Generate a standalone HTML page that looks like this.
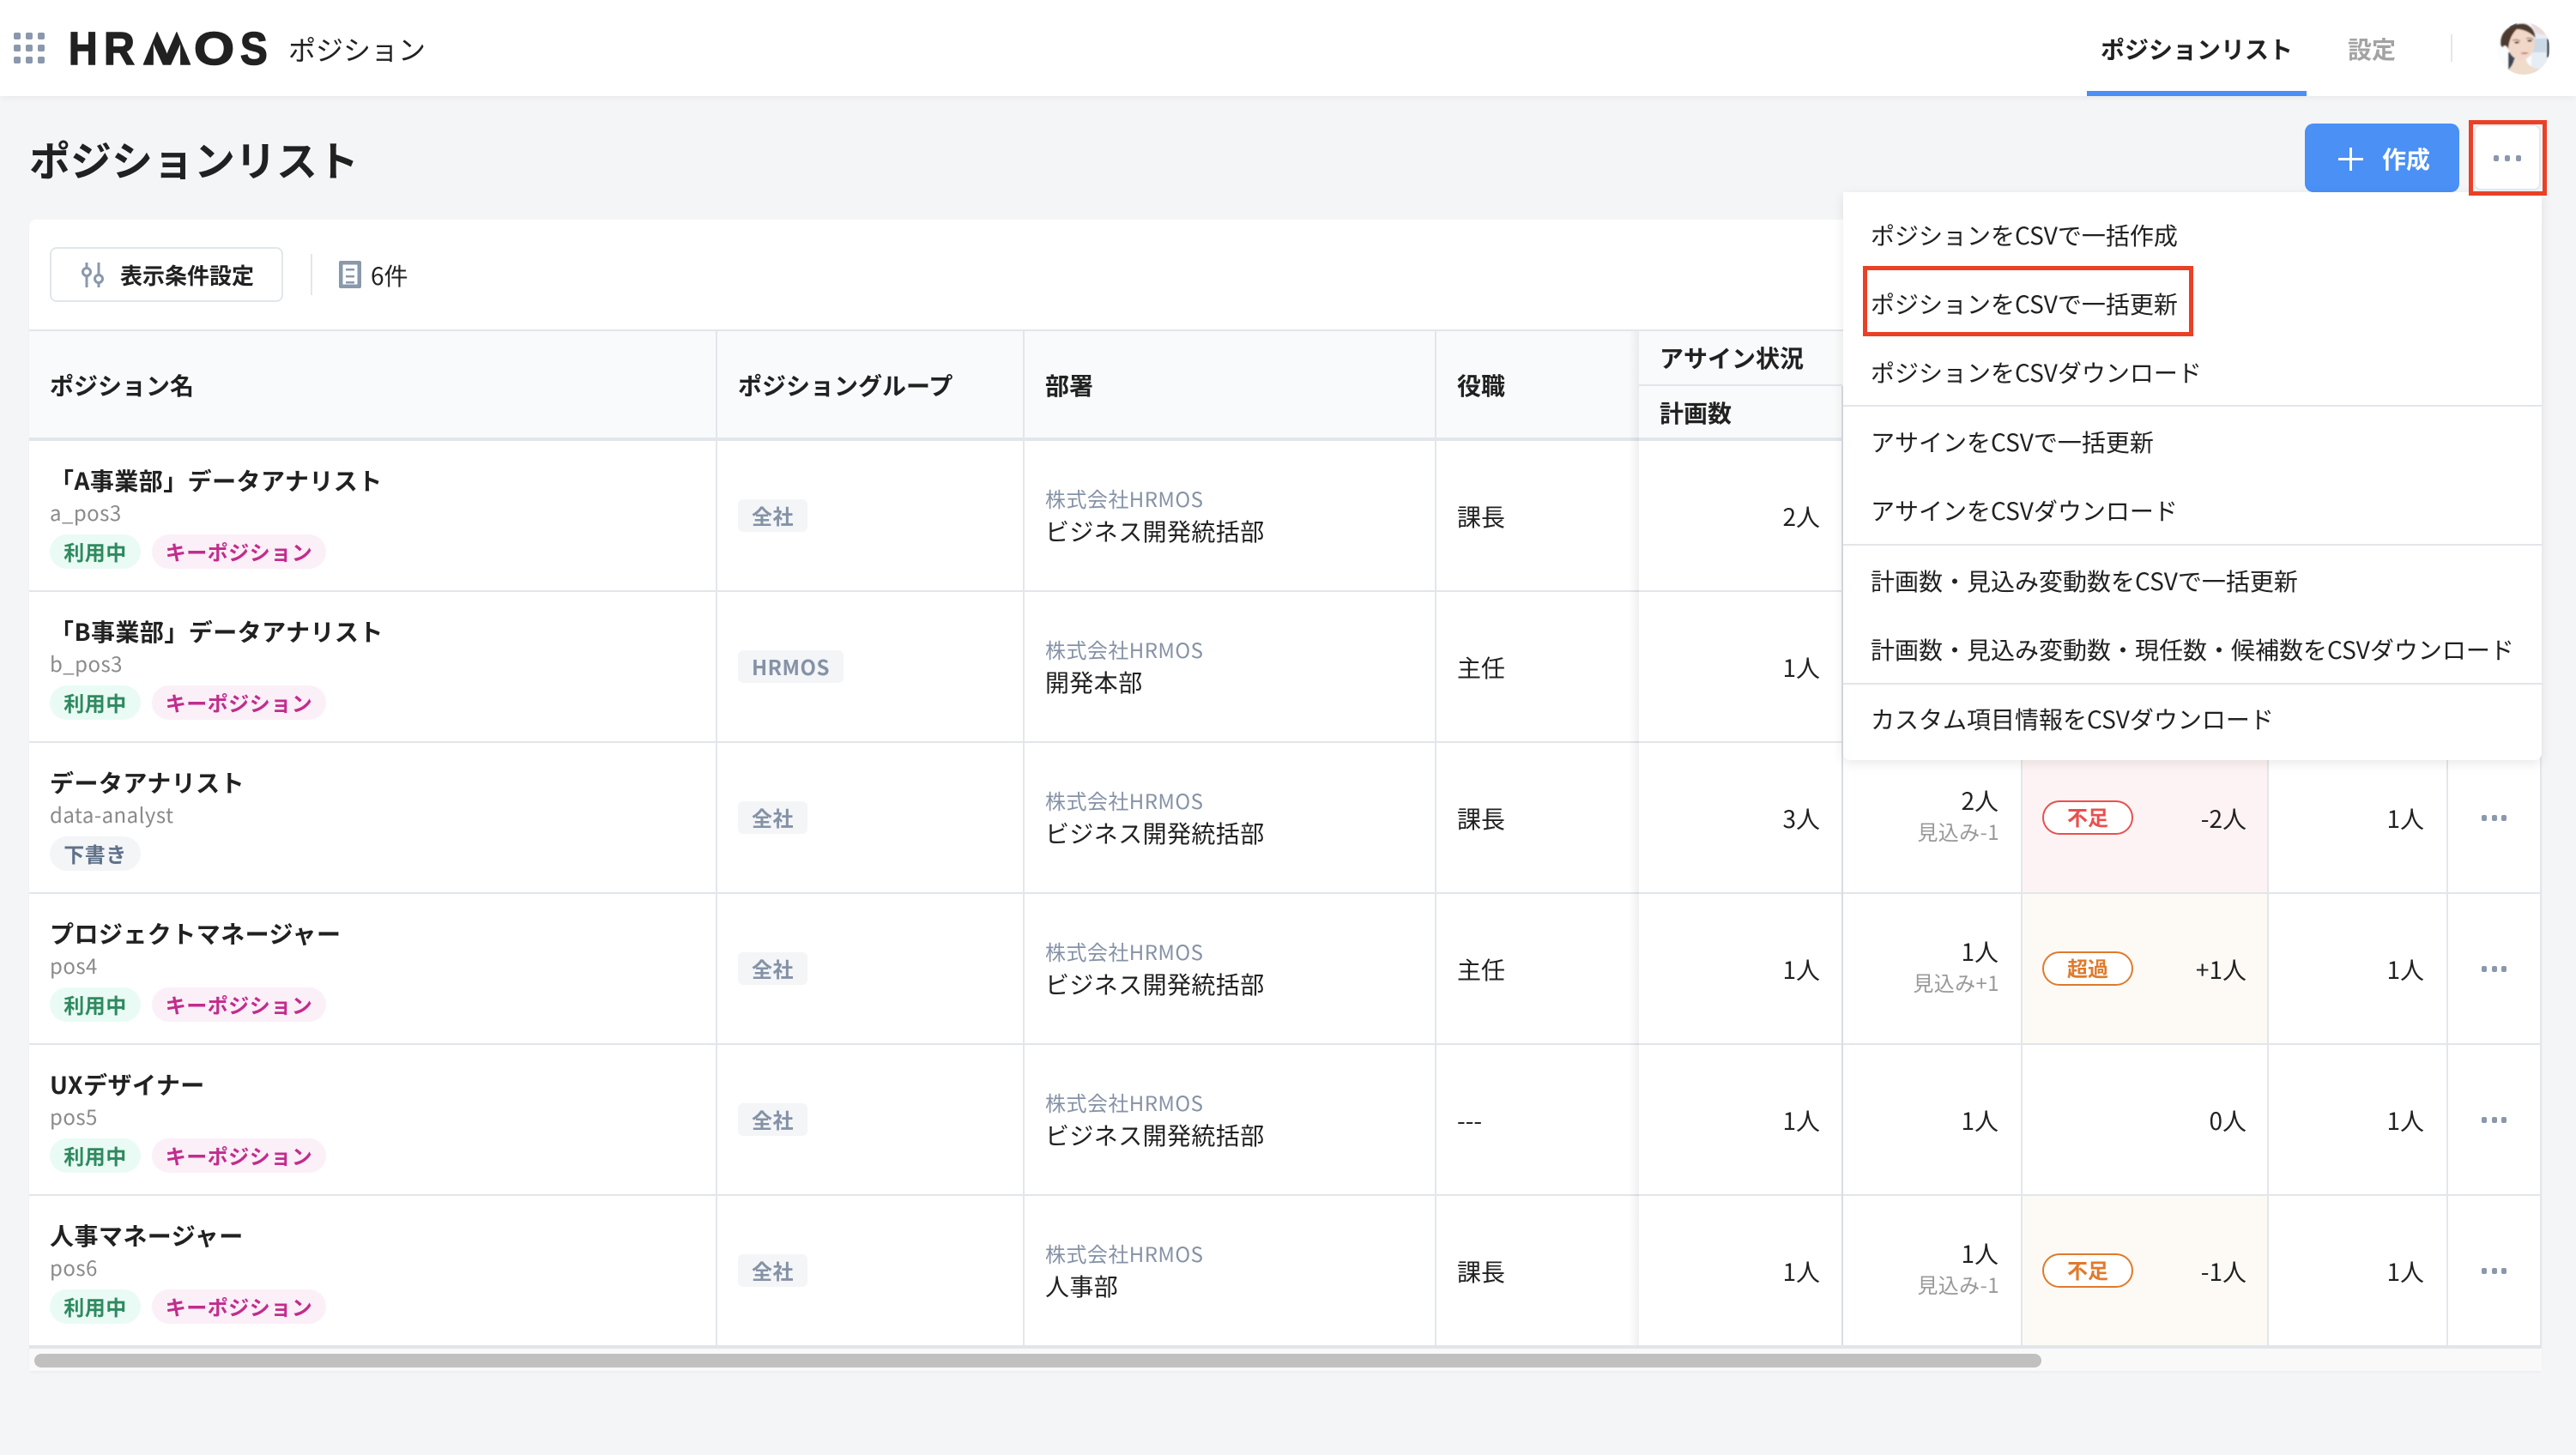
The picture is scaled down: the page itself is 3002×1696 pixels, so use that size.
<!DOCTYPE html>
<html lang="ja"><head><meta charset="utf-8"><title>ポジションリスト</title>
<style>
*{box-sizing:border-box;margin:0;padding:0}
html,body{width:3002px;height:1696px;overflow:hidden;background:#f4f5f7}
body{position:relative;font-family:"Noto Sans CJK JP","Liberation Sans",sans-serif;color:#212121;font-size:28px}
.a{position:absolute}
.t{position:absolute;white-space:nowrap;line-height:40px;height:40px;font-size:28px}
.b{font-weight:700}
.vl{position:absolute;width:2px;top:386px;height:1182px;background:#e3e6ea}
.hl{position:absolute;left:34px;width:2928px;height:2px;background:#e2e6ea}
.row{position:absolute;left:0;width:3002px;height:174px}
.nm{left:58px;top:26px;font-weight:700;letter-spacing:.45px}
.sub{left:58px;top:63px;font-size:24px;color:#8a8a8a;letter-spacing:.45px}
.pill{position:absolute;top:109px;height:40px;line-height:39px;border-radius:20px;font-size:24px;font-weight:700;text-align:center;white-space:nowrap;letter-spacing:.5px}
.p1{left:58px;width:106px;background:#e9fbf4;color:#2f8a5f}
.p2{left:177px;width:203px;background:#fbeff8;color:#c22c8c}
.p3{left:58px;width:106px;background:#f3f5f7;color:#5f7189}
.grp{position:absolute;left:860px;top:68px;height:38px;line-height:37px;padding:0 16px;border-radius:6px;background:#f3f5f7;color:#8592a6;font-size:24px;font-weight:700;white-space:nowrap;letter-spacing:.5px}
.d1{left:1218px;top:47px;font-size:24px;color:#8592a6;letter-spacing:.45px}
.d2{left:1218px;top:85px;letter-spacing:.4px}
.role{left:1698px;top:68px}
.plan{right:881px;top:68px}
.as{right:673px;top:68px}
.as2{right:673px;top:47px}
.as3{right:672px;top:83px;font-size:24px;color:#999;letter-spacing:.4px}
.dn{right:384px;top:68px}
.nx{right:177px;top:68px}
.st{position:absolute;left:2380px;top:67px;width:106px;height:40px;border-radius:20px;background:#fff;border:2px solid;font-size:24px;font-weight:700;text-align:center;line-height:34px}
.red{color:#e8504f;border-color:#e8504f}
.org{color:#e07a2b;border-color:#e07a2b}
.dots{position:absolute;left:2892px;top:84px;width:29px;height:7px;display:flex;justify-content:space-between}
.dots i{display:block;width:6px;height:7px;border-radius:2px;background:#8a98ac}
.cell{position:absolute;left:2356px;width:286px;height:174px}
.lg{position:absolute;top:30px;font-family:"Liberation Sans",sans-serif;font-weight:700;font-size:54px;line-height:54px;color:#212121;transform-origin:left center;display:block;-webkit-text-stroke:1.6px #212121}
.gd{position:absolute;width:8px;height:8px;border-radius:2px;background:#8a98ac}
.mi{left:2180px;color:#212121}
.md{position:absolute;left:2148px;width:814px;height:2px;background:#e3e5e8}
.rb{position:absolute;border:5px solid #ea4126}
</style></head><body>

<!-- header -->
<div class="a" style="left:0;top:0;width:3002px;height:112px;background:#fff;box-shadow:0 2px 8px rgba(0,0,0,.05)"></div>
<i class="gd" style="left:16px;top:38px"></i><i class="gd" style="left:30px;top:38px"></i><i class="gd" style="left:44px;top:38px"></i>
<i class="gd" style="left:16px;top:52px"></i><i class="gd" style="left:30px;top:52px"></i><i class="gd" style="left:44px;top:52px"></i>
<i class="gd" style="left:16px;top:66px"></i><i class="gd" style="left:30px;top:66px"></i><i class="gd" style="left:44px;top:66px"></i>
<div><span class="lg" style="left:80px;transform:scaleX(.86)">H</span><span class="lg" style="left:121px;transform:scaleX(.92)">R</span><span class="lg" style="left:163px;transform:scaleX(1.4);clip-path:polygon(0 100%,36% 0,64% 0,100% 100%)">M</span><span class="lg" style="left:226px;transform:scaleX(1.12)">O</span><span class="lg" style="left:280px;transform:scaleX(.88)">S</span></div>
<div class="t" style="left:336px;top:37px;font-size:32px">ポジション</div>
<div class="t b" style="left:2448px;top:37px">ポジションリスト</div>
<div class="a" style="left:2432px;top:106px;width:256px;height:6px;background:#4a90f5"></div>
<div class="t b" style="left:2736px;top:37px;color:#a3a3a3">設定</div>
<div class="a" style="left:2856px;top:40px;width:2px;height:32px;background:#e3e6ea"></div>
<svg class="a" style="left:2890px;top:15px" width="100" height="85" viewBox="0 0 100 85">
<defs><clipPath id="c"><circle cx="51" cy="41.5" r="30.5"/></clipPath><filter id="bl"><feGaussianBlur stdDeviation=".7"/></filter></defs>
<g clip-path="url(#c)"><g filter="url(#bl)">
<rect width="100" height="85" fill="#fafcfd"/>
<rect x="60" y="10" width="20" height="60" fill="#e6edf4"/>
<rect x="62" y="30" width="15" height="16" fill="#cbd8e6"/>
<polygon points="58,10 76,10 76,26 66,24" fill="#ecdada"/>
<rect x="78" y="30" width="3" height="22" fill="#39434f"/>
<rect x="33" y="10" width="10" height="6" fill="#74828f"/>
<rect x="33" y="46" width="8" height="20" fill="#3c4654"/>
<path d="M29 69 Q38 64 40 54 L54 54 Q55 63 70 66 L70 80 L29 80Z" fill="#efdccb"/>
<ellipse cx="48" cy="35" rx="16" ry="20" fill="#f1d7c8"/>
<path d="M24 36C23 20 38 12 50 12.500C59 13 65 22 64.500 29C58 22 50 19 43 19C37 25 34 32 33 42C31 38 28 37 27 40C25 40 24 38 24 36Z" fill="#4f3a2d"/>
<path d="M38 32 Q43 30 47 33 M54 30 Q58 28 62 31" stroke="#8a6a58" stroke-width="1" fill="none"/>
<ellipse cx="43" cy="34.500" rx="2.800" ry="1.300" fill="#5a4640"/><ellipse cx="58" cy="32.500" rx="2.800" ry="1.300" fill="#5a4640"/>
<path d="M47 47 Q52 45 57 46.500 Q52 50 47 47Z" fill="#c98a80"/>
</g></g></svg>

<!-- title row -->
<div class="t b" style="left:34px;top:164px;font-size:48px;line-height:40px">ポジションリスト</div>
<div class="a" style="left:2686px;top:144px;width:180px;height:80px;border-radius:10px;background:#4a90f5"></div>
<div class="a" style="left:2725px;top:184px;width:29px;height:3px;background:#fff"></div>
<div class="a" style="left:2738px;top:172px;width:3px;height:27px;background:#fff"></div>
<div class="t b" style="left:2776px;top:165px;color:#fff">作成</div>
<div class="a" style="left:2883px;top:145px;width:78px;height:77px;border-radius:8px;background:#fff;border:2px solid #e6e9ec"></div>
<div class="dots" style="left:2906px;top:181px;width:32px;height:7px"><i></i><i></i><i></i></div>

<!-- card -->
<div class="a" style="left:34px;top:256px;width:2928px;height:1342px;background:#fff;border-radius:8px 8px 4px 4px;box-shadow:0 2px 2px rgba(0,0,0,.03)"></div>
<div class="a" style="left:58px;top:288px;width:272px;height:64px;border:2px solid #e2e6ea;border-radius:8px;background:#fff"></div>
<svg class="a" style="left:90px;top:300px" width="40" height="40" viewBox="0 0 40 40" fill="none" stroke="#8a98ac" stroke-width="3">
<path d="M11 6V35M25 6V35"/><circle cx="11" cy="17" r="4.500" fill="#fff"/><circle cx="25" cy="25" r="4.500" fill="#fff"/></svg>
<div class="t b" style="left:140px;top:301px;font-size:26px">表示条件設定</div>
<div class="a" style="left:362px;top:296px;width:2px;height:48px;background:#e3e6ea"></div>
<svg class="a" style="left:395px;top:304px" width="26" height="32" viewBox="0 0 26 32">
<rect width="26" height="32" rx="2" fill="#8a98ac"/><rect x="4.500" y="4.500" width="17" height="23" fill="#fff"/>
<rect x="8" y="9" width="10" height="2.500" fill="#8a98ac"/><rect x="8" y="17" width="10" height="2.500" fill="#8a98ac"/><rect x="8" y="24" width="10" height="2.500" fill="#8a98ac"/></svg>
<div class="t" style="left:432px;top:301px">6件</div>

<!-- table header -->
<div class="a" style="left:34px;top:386px;width:2928px;height:124px;background:#f9fafb"></div>
<div class="hl" style="top:384px"></div>
<div class="t b" style="left:58px;top:429px">ポジション名</div>
<div class="t b" style="left:860px;top:429px">ポジショングループ</div>
<div class="t b" style="left:1218px;top:429px">部署</div>
<div class="t b" style="left:1698px;top:429px">役職</div>
<div class="t b" style="left:1934px;top:397px">アサイン状況</div>
<div class="t b" style="left:1934px;top:461px">計画数</div>
<div class="a" style="left:1910px;top:448px;width:237px;height:2px;background:#e2e6ea"></div>
<div class="a" style="left:34px;top:510px;width:2928px;height:4px;background:#e2e6ea"></div>

<!-- status cell tints -->
<div class="cell" style="top:866px;background:#fdf3f4"></div>
<div class="cell" style="top:1042px;background:#fdfaf6"></div>
<div class="cell" style="top:1394px;background:#fdfaf6"></div>

<!-- row lines -->
<div class="hl" style="top:688px"></div><div class="hl" style="top:864px"></div><div class="hl" style="top:1040px"></div><div class="hl" style="top:1216px"></div><div class="hl" style="top:1392px"></div>
<div class="a" style="left:34px;top:1568px;width:2928px;height:4px;background:#e2e6ea"></div>

<!-- col lines -->
<div class="vl" style="left:834px"></div><div class="vl" style="left:1192px"></div><div class="vl" style="left:1672px"></div>
<div class="vl" style="left:2146px;top:450px;height:1118px;background:#d9dde3"></div>
<div class="vl" style="left:2355px"></div><div class="vl" style="left:2642px"></div><div class="vl" style="left:2851px"></div><div class="vl" style="left:2960px"></div>
<div class="a" style="left:1898px;top:386px;width:12px;height:1182px;background:linear-gradient(to left,rgba(0,0,0,.06),rgba(0,0,0,0))"></div>

<!-- rows -->
<div class="row" style="top:514px">
<div class="t nm">「A事業部」データアナリスト</div><div class="t sub">a_pos3</div><div class="pill p1">利用中</div><div class="pill p2">キーポジション</div>
<div class="grp">全社</div><div class="t d1">株式会社HRMOS</div><div class="t d2">ビジネス開発統括部</div><div class="t role">課長</div><div class="t plan">2人</div>
</div>
<div class="row" style="top:690px">
<div class="t nm">「B事業部」データアナリスト</div><div class="t sub">b_pos3</div><div class="pill p1">利用中</div><div class="pill p2">キーポジション</div>
<div class="grp">HRMOS</div><div class="t d1">株式会社HRMOS</div><div class="t d2">開発本部</div><div class="t role">主任</div><div class="t plan">1人</div>
</div>
<div class="row" style="top:866px">
<div class="t nm">データアナリスト</div><div class="t sub">data-analyst</div><div class="pill p3">下書き</div>
<div class="grp">全社</div><div class="t d1">株式会社HRMOS</div><div class="t d2">ビジネス開発統括部</div><div class="t role">課長</div><div class="t plan">3人</div>
<div class="t as2">2人</div><div class="t as3">見込み-1</div><div class="st red">不足</div><div class="t dn">-2人</div><div class="t nx">1人</div><div class="dots"><i></i><i></i><i></i></div>
</div>
<div class="row" style="top:1042px">
<div class="t nm">プロジェクトマネージャー</div><div class="t sub">pos4</div><div class="pill p1">利用中</div><div class="pill p2">キーポジション</div>
<div class="grp">全社</div><div class="t d1">株式会社HRMOS</div><div class="t d2">ビジネス開発統括部</div><div class="t role">主任</div><div class="t plan">1人</div>
<div class="t as2">1人</div><div class="t as3">見込み+1</div><div class="st org">超過</div><div class="t dn">+1人</div><div class="t nx">1人</div><div class="dots"><i></i><i></i><i></i></div>
</div>
<div class="row" style="top:1218px">
<div class="t nm">UXデザイナー</div><div class="t sub">pos5</div><div class="pill p1">利用中</div><div class="pill p2">キーポジション</div>
<div class="grp">全社</div><div class="t d1">株式会社HRMOS</div><div class="t d2">ビジネス開発統括部</div><div class="t role">---</div><div class="t plan">1人</div>
<div class="t as">1人</div><div class="t dn">0人</div><div class="t nx">1人</div><div class="dots"><i></i><i></i><i></i></div>
</div>
<div class="row" style="top:1394px">
<div class="t nm">人事マネージャー</div><div class="t sub">pos6</div><div class="pill p1">利用中</div><div class="pill p2">キーポジション</div>
<div class="grp">全社</div><div class="t d1">株式会社HRMOS</div><div class="t d2">人事部</div><div class="t role">課長</div><div class="t plan">1人</div>
<div class="t as2">1人</div><div class="t as3">見込み-1</div><div class="st org">不足</div><div class="t dn">-1人</div><div class="t nx">1人</div><div class="dots"><i></i><i></i><i></i></div>
</div>

<!-- scrollbar -->
<div class="a" style="left:34px;top:1572px;width:2928px;height:26px;background:#f9f9f9"></div>
<div class="a" style="left:40px;top:1578px;width:2339px;height:16px;border-radius:8px;background:#c0c0c0"></div>

<!-- dropdown -->
<div class="a" style="left:2148px;top:224px;width:814px;height:662px;background:#fff;border-radius:0 0 8px 8px;box-shadow:0 4px 14px rgba(0,0,0,.09)"></div>
<div class="t mi" style="top:254px">ポジションをCSVで一括作成</div>
<div class="t mi" style="top:334px">ポジションをCSVで一括更新</div>
<div class="t mi" style="top:414px">ポジションをCSVダウンロード</div>
<div class="md" style="top:472px"></div>
<div class="t mi" style="top:495px">アサインをCSVで一括更新</div>
<div class="t mi" style="top:575px">アサインをCSVダウンロード</div>
<div class="md" style="top:634px"></div>
<div class="t mi" style="top:657px">計画数・見込み変動数をCSVで一括更新</div>
<div class="t mi" style="top:737px">計画数・見込み変動数・現任数・候補数をCSVダウンロード</div>
<div class="md" style="top:796px"></div>
<div class="t mi" style="top:818px">カスタム項目情報をCSVダウンロード</div>

<!-- red annotation boxes -->
<div class="rb" style="left:2877px;top:140px;width:91px;height:88px"></div>
<div class="rb" style="left:2171px;top:310px;width:385px;height:82px"></div>
</body></html>
